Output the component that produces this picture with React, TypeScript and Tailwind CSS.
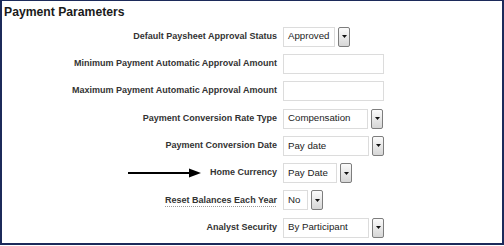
const ROWS: { label: string; kind: 'select' | 'input'; value?: string; w?: number; link?: boolean }[] = [
  { label: 'Default Paysheet Approval Status', kind: 'select', value: 'Approved', w: 52 },
  { label: 'Minimum Payment Automatic Approval Amount', kind: 'input' },
  { label: 'Maximum Payment Automatic Approval Amount', kind: 'input' },
  { label: 'Payment Conversion Rate Type', kind: 'select', value: 'Compensation', w: 85 },
  { label: 'Payment Conversion Date', kind: 'select', value: 'Pay date', w: 86 },
  { label: 'Home Currency', kind: 'select', value: 'Pay Date', w: 54 },
  { label: 'Reset Balances Each Year', kind: 'select', value: 'No', w: 25, link: true },
  { label: 'Analyst Security', kind: 'select', value: 'By Participant', w: 86 },
]

function Select({ value, w }: { value: string; w: number }) {
  return (
    <div className="flex items-center gap-[3px]">
      <div
        className="h-[20px] border border-[#dcdcdc] bg-white pl-[4px] flex items-center text-[9.7px] text-[#222]"
        style={{ width: w }}
      >
        {value}
      </div>
      {/* dropdown button */}
      <div className="w-[12px] h-[20px] border border-[#7d7d7d] rounded-[2px] bg-[linear-gradient(180deg,#fbfbfb,#d6d6d6)] flex items-center justify-center">
        <svg width="5" height="3" viewBox="0 0 5 3">
          <path d="M0 0h5L2.5 3z" fill="#111" />
        </svg>
      </div>
    </div>
  )
}

export default function App() {
  return (
    <div className="relative w-[504px] h-[245px] bg-white border-2 border-t border-[#1c2a5a] font-['Liberation_Sans',Arial,sans-serif] overflow-hidden">
      <div className="h-[22px] pl-[2px] flex items-center text-[12.2px] font-bold text-[#1a1a1a]">
        Payment Parameters
      </div>

      <div className="grid grid-cols-[275px_1fr] gap-x-[6px] auto-rows-[27.3px] items-center">
        {ROWS.map(r => (
          <div key={r.label} className="contents">
            <div className="text-right text-[9px] font-bold text-[#333]">
              {r.link ? (
                <span className="underline decoration-[#999] decoration-dotted underline-offset-[3px]">{r.label}</span>
              ) : r.label}
            </div>
            <div>
              {r.kind === 'input' ? (
                <div className="w-[101px] h-[20px] border border-[#dcdcdc] bg-white" />
              ) : (
                <Select value={r.value!} w={r.w!} />
              )}
            </div>
          </div>
        ))}
      </div>

      {/* annotation arrow */}
      <svg className="absolute left-[124px] top-[166px]" width="78" height="12" viewBox="0 0 78 12">
        <line x1="2" y1="6" x2="66" y2="6" stroke="#000" strokeWidth="2" />
        <path d="M63 1.5L75 6L63 10.5z" fill="#000" />
      </svg>
    </div>
  )
}
